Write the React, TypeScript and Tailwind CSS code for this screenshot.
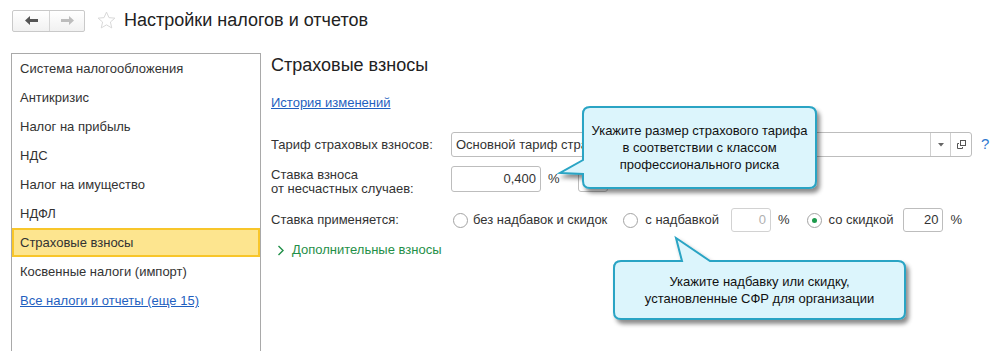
import React from 'react';

const MENU = [
    'Система налогообложения',
    'Антикризис',
    'Налог на прибыль',
    'НДС',
    'Налог на имущество',
    'НДФЛ',
    'Страховые взносы',
    'Косвенные налоги (импорт)',
];

const SELECTED = 'Страховые взносы';

const Arrow: React.FC<{ dir: 'left' | 'right'; color: string }> = ({ dir, color }) => (
    <svg width="13" height="9" viewBox="0 0 13 9" className={dir === 'right' ? 'scale-x-[-1]' : ''}>
        <path d="M0 4.5 L5 0 V3 H13 V6 H5 V9 Z" fill={color} />
    </svg>
);

const Radio: React.FC<{ checked?: boolean }> = ({ checked }) => (
    <span className="w-[15px] h-[15px] rounded-full border border-[#a3a3a3] bg-white flex items-center justify-center shrink-0">
        {checked && <span className="w-[5px] h-[5px] rounded-full bg-[#1d9a4c]" />}
    </span>
);

const SmallInput: React.FC<{ value: string; disabled?: boolean; className?: string }> = ({ value, disabled, className }) => (
    <div
        className={`h-[24px] border border-[#bdbdbd] rounded-[3px] bg-white flex items-center justify-end pr-[4px] ${
            disabled ? 'text-[#b0b0b0] border-[#d2d2d2]' : 'text-[#333]'
        } ${className ?? ''}`}
    >
        {value}
    </div>
);

const CalloutFilter: React.FC<{ id: string }> = ({ id }) => (
    <defs>
        <filter id={id} x="-10%" y="-20%" width="130%" height="150%">
            <feDropShadow dx="3" dy="4" stdDeviation="2.2" floodColor="#000" floodOpacity="0.45" />
        </filter>
    </defs>
);

const App: React.FC = () => {
    return (
        <div className="relative w-[994px] h-[351px] overflow-hidden bg-white font-['Liberation_Sans',Arial,sans-serif] text-[13px] text-[#333]">
            {/* header */}
            <div className="flex items-center h-[41px] pl-[12px]">
                <div className="flex h-[22px] border border-[#c9c9c9] rounded-[2px] bg-gradient-to-b from-white to-[#f1f1f1]">
                    <div className="w-[37px] flex items-center justify-center border-r border-[#d4d4d4]">
                        <Arrow dir="left" color="#555" />
                    </div>
                    <div className="w-[34px] flex items-center justify-center">
                        <Arrow dir="right" color="#bdbdbd" />
                    </div>
                </div>
                <svg width="19" height="19" viewBox="0 0 20 20" className="ml-[12px]">
                    <path
                        d="M10 1.2 L12.6 7 L18.8 7.5 L14.1 11.6 L15.5 17.8 L10 14.6 L4.5 17.8 L5.9 11.6 L1.2 7.5 L7.4 7 Z"
                        fill="none"
                        stroke="#d6d6d6"
                        strokeWidth="1"
                        strokeLinejoin="round"
                    />
                </svg>
                <div className="ml-[8px] text-[18px] text-[#222]">Настройки налогов и отчетов</div>
            </div>

            <div className="flex mt-[12px]">
                {/* left menu */}
                <div className="ml-[11px] w-[250px] h-[310px] border border-b-0 border-[#a9a9a9] shrink-0">
                    {MENU.map((item) =>
                        item === SELECTED ? (
                            <div
                                key={item}
                                className="h-[29px] flex items-center pl-[6px] bg-[#fde58f] border-2 border-[#f8c62a]"
                            >
                                {item}
                            </div>
                        ) : (
                            <div key={item} className="h-[29px] flex items-center pl-[8px]">
                                {item}
                            </div>
                        )
                    )}
                    <div className="h-[29px] flex items-center pl-[8px]">
                        <span className="text-[#1f5fc0] underline">Все налоги и отчеты (еще 15)</span>
                    </div>
                </div>

                {/* settings */}
                <div className="ml-[10px] flex flex-col">
                    <div className="text-[18px] leading-[22px] text-[#222] mt-[1px]">Страховые взносы</div>
                    <div className="mt-[19px] leading-[16px]">
                        <span className="text-[#1f5fc0] underline">История изменений</span>
                    </div>

                    <div className="mt-[21px] flex items-center h-[25px]">
                        <div className="w-[180px]">Тариф страховых взносов:</div>
                        <div className="w-[521px] h-[25px] border border-[#bdbdbd] rounded-[3px] bg-white flex">
                            <div className="flex-1 flex items-center pl-[4px] overflow-hidden whitespace-nowrap">
                                Основной тариф страховых взносов
                            </div>
                            <div className="w-[20px] border-l border-[#d0d0d0] flex items-center justify-center">
                                <svg width="6" height="4" viewBox="0 0 6 4">
                                    <path d="M0 0 H6 L3 3.5 Z" fill="#666" />
                                </svg>
                            </div>
                            <div className="w-[21px] border-l border-[#d0d0d0] flex items-center justify-center">
                                <svg width="11" height="11" viewBox="0 0 11 11">
                                    <rect x="4.5" y="1.5" width="5" height="5" fill="none" stroke="#555" />
                                    <path d="M3 4.5 H1.5 V9.5 H6.5 V8" fill="none" stroke="#555" />
                                </svg>
                            </div>
                        </div>
                        <div className="ml-[9px] text-[15px] text-[#2e79cf]">?</div>
                    </div>

                    <div className="mt-[9px] flex items-start h-[26px]">
                        <div className="w-[180px] leading-[14px] mt-[2px]">
                            Ставка взноса
                            <br />
                            от несчастных случаев:
                        </div>
                        <SmallInput value="0,400" className="w-[90px] h-[26px]" />
                        <div className="ml-[7px] self-center">%</div>
                        <div className="ml-[18px] w-[30px] h-[26px] border border-[#bdbdbd] rounded-[3px]" />
                    </div>

                    <div className="mt-[16px] flex items-center h-[24px] whitespace-nowrap">
                        <div className="w-[182px]">Ставка применяется:</div>
                        <Radio />
                        <span className="ml-[5px]">без надбавок и скидок</span>
                        <span className="ml-[16px]">
                            <Radio />
                        </span>
                        <span className="ml-[7px]">с надбавкой</span>
                        <SmallInput value="0" disabled className="ml-[12px] w-[40px]" />
                        <span className="ml-[7px]">%</span>
                        <span className="ml-[17px]">
                            <Radio checked />
                        </span>
                        <span className="ml-[7px]">со скидкой</span>
                        <SmallInput value="20" className="ml-[10px] w-[40px]" />
                        <span className="ml-[7px]">%</span>
                    </div>

                    <div className="mt-[10px] flex items-center leading-[16px] text-[#1f8f48]">
                        <svg width="8" height="11" viewBox="0 0 8 11" className="ml-[6px]">
                            <path d="M1.5 1 L6 5.5 L1.5 10" fill="none" stroke="#1f8f48" strokeWidth="1.4" />
                        </svg>
                        <span className="ml-[7px]">Дополнительные взносы</span>
                    </div>
                </div>
            </div>

            {/* callout: tariff */}
            <svg width="275" height="105" viewBox="0 0 275 105" className="absolute left-[555px] top-[100px] overflow-visible">
                <CalloutFilter id="sh1" />
                <path
                    d="M35 7 H254 Q261 7 261 14 V81 Q261 88 254 88 H35 Q28 88 28 81 V74 L5 73 L28 60 V14 Q28 7 35 7 Z"
                    fill="#dcf5fc"
                    stroke="#29a4c4"
                    strokeWidth="2"
                    filter="url(#sh1)"
                />
            </svg>
            <div className="absolute left-[583px] top-[107px] w-[233px] h-[81px] flex flex-col items-center justify-center text-center leading-[17px] text-[#111]">
                <div>Укажите размер страхового тарифа</div>
                <div>в соответствии с классом</div>
                <div>профессионального риска</div>
            </div>

            {/* callout: surcharge / discount */}
            <svg width="310" height="100" viewBox="0 0 310 100" className="absolute left-[605px] top-[230px] overflow-visible">
                <CalloutFilter id="sh2" />
                <path
                    d="M16 31 H77 L71 8 L105 31 H293 Q300 31 300 38 V82 Q300 89 293 89 H16 Q9 89 9 82 V38 Q9 31 16 31 Z"
                    fill="#dcf5fc"
                    stroke="#29a4c4"
                    strokeWidth="2"
                    filter="url(#sh2)"
                />
            </svg>
            <div className="absolute left-[614px] top-[261px] w-[291px] h-[58px] flex flex-col items-center justify-center text-center leading-[17px] text-[#111]">
                <div>Укажите надбавку или скидку,</div>
                <div>установленные СФР для организации</div>
            </div>
        </div>
    );
};

export default App;
